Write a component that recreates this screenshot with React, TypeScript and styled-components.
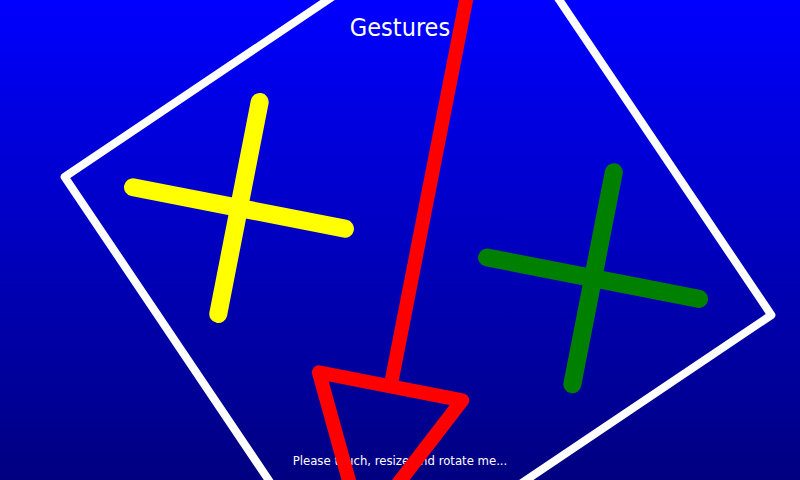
import styled, { createGlobalStyle } from 'styled-components';

// Everything on the canvas is drawn unrotated around the centre, then tilted.
const CENTER = { x: 418, y: 246 };
const TILT = 11.06;
const HALF = 360;
const ARM = 108;

type Cross = { cx: number; cy: number; color: string };

const crosses: Cross[] = [
  { cx: -183, cy: -3, color: '#ffff00' },
  { cx: 178, cy: -2, color: '#008000' },
];

function Canvas() {
  return (
    <StyledCanvas width={800} height={480} viewBox="0 0 800 480">
      <g transform={`translate(${CENTER.x} ${CENTER.y}) rotate(${TILT})`}>
        <polygon
          points={`${-HALF},0 0,${-HALF} ${HALF},0 0,${HALF}`}
          fill="none"
          stroke="#ffffff"
          strokeWidth={8}
          strokeLinejoin="round"
        />
        {crosses.map((c) => (
          <g key={c.color} stroke={c.color} strokeWidth={18} strokeLinecap="round">
            <line x1={c.cx} y1={c.cy - ARM} x2={c.cx} y2={c.cy + ARM} />
            <line x1={c.cx - ARM} y1={c.cy} x2={c.cx + ARM} y2={c.cy} />
          </g>
        ))}
        <g stroke="#ff0000" strokeWidth={14} strokeLinejoin="round" fill="none">
          <line x1={0} y1={-HALF} x2={0} y2={143} />
          <polygon points="-73,143 73,143 0,289" />
        </g>
      </g>
    </StyledCanvas>
  );
}

function App() {
  return (
    <>
      <GlobalStyle />
      <StyledScreen>
        <StyledTitle>Gestures</StyledTitle>
        <StyledHint>Please touch, resize and rotate me...</StyledHint>
        <Canvas />
      </StyledScreen>
    </>
  );
}

const GlobalStyle = createGlobalStyle`
  html, body {
    margin: 0;
    padding: 0;
    background: #000080;
  }
`;

const StyledScreen = styled.div`
  position: relative;
  width: 800px;
  height: 480px;
  overflow: hidden;
  display: flex;
  flex-direction: column;
  justify-content: space-between;
  align-items: center;
  background: linear-gradient(to bottom, #0000ff 0%, #000080 100%);
  font-family: 'DejaVu Sans Condensed', 'DejaVu Sans', sans-serif;
  color: #ffffff;
`;

const StyledTitle = styled.div`
  padding-top: 15px;
  font-size: 25px;
  line-height: 25px;
`;

const StyledHint = styled.div`
  padding-bottom: 13px;
  font-size: 13px;
  line-height: 13px;
`;

const StyledCanvas = styled.svg`
  position: absolute;
  left: 0;
  top: 0;
  display: block;
`;

export default App;
